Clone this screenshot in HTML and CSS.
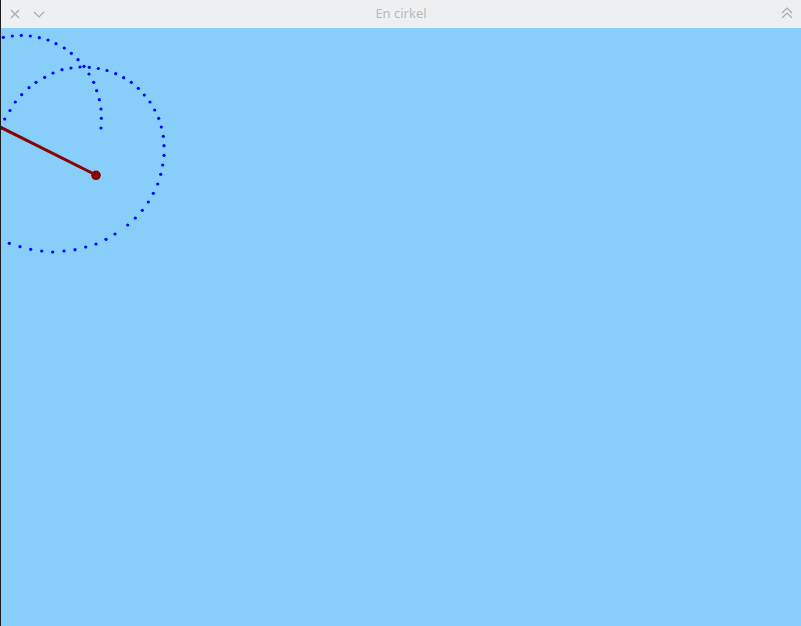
FILE: index.html
```html
<!DOCTYPE html>
<html lang="sv">
<head>
<meta charset="utf-8">
<title>En cirkel</title>
<link rel="stylesheet" href="styles.css">
</head>
<body>
<div class="window">
  <header class="titlebar">
    <div class="left-btns">
      <svg class="icon" width="14" height="14" viewBox="0 0 14 14"><path d="M3 3 L11 11 M11 3 L3 11" stroke="#a9aaac" stroke-width="1.2" fill="none"/></svg>
      <svg class="icon" width="14" height="14" viewBox="0 0 14 14"><path d="M2 5 L7 10 L12 5" stroke="#a9aaac" stroke-width="1.2" fill="none"/></svg>
    </div>
    <div class="title">En cirkel</div>
    <div class="right-btns">
      <svg class="icon" width="14" height="14" viewBox="0 0 14 14"><path d="M2 7 L7 2 L12 7 M2 12 L7 7 L12 12" stroke="#a9aaac" stroke-width="1.2" fill="none"/></svg>
    </div>
  </header>
  <main class="canvas">
    <svg class="drawing" width="800" height="598" viewBox="1 28 800 598">
      <g fill="#0000ff">
        <circle cx="3.3" cy="37.3" r="1.6"/><circle cx="12.3" cy="36" r="1.6"/><circle cx="21.3" cy="35.3" r="1.6"/><circle cx="30.3" cy="36" r="1.6"/><circle cx="39.3" cy="37.7" r="1.6"/><circle cx="48" cy="40" r="1.6"/><circle cx="56" cy="43.7" r="1.6"/><circle cx="64.3" cy="48" r="1.6"/><circle cx="71.3" cy="53.3" r="1.6"/><circle cx="78" cy="59.7" r="1.6"/><circle cx="84" cy="66.3" r="1.6"/><circle cx="89" cy="74" r="1.6"/><circle cx="93.7" cy="82.3" r="1.6"/><circle cx="96.7" cy="90.7" r="1.6"/><circle cx="99.3" cy="99.7" r="1.6"/><circle cx="101" cy="109" r="1.6"/><circle cx="101.3" cy="118.3" r="1.6"/><circle cx="101" cy="128" r="1.6"/>
        <circle cx="62" cy="69.7" r="1.6"/><circle cx="71" cy="68" r="1.6"/><circle cx="80" cy="67" r="1.6"/><circle cx="89.3" cy="67.3" r="1.6"/><circle cx="98.3" cy="68.5" r="1.6"/><circle cx="107" cy="70.5" r="1.6"/><circle cx="115.7" cy="73.7" r="1.6"/><circle cx="123.7" cy="77.7" r="1.6"/><circle cx="131.3" cy="82.3" r="1.6"/><circle cx="138.3" cy="88.3" r="1.6"/><circle cx="144.3" cy="95" r="1.6"/><circle cx="150" cy="102" r="1.6"/><circle cx="154.7" cy="110" r="1.6"/><circle cx="158.7" cy="118.3" r="1.6"/><circle cx="161.3" cy="127" r="1.6"/><circle cx="163.3" cy="136.3" r="1.6"/><circle cx="164" cy="145.7" r="1.6"/><circle cx="164" cy="155.3" r="1.6"/><circle cx="162.7" cy="165" r="1.6"/><circle cx="160.7" cy="174.3" r="1.6"/><circle cx="157.7" cy="184" r="1.6"/><circle cx="153.3" cy="193.3" r="1.6"/><circle cx="148.3" cy="202" r="1.6"/><circle cx="142.3" cy="210.3" r="1.6"/><circle cx="135.3" cy="218" r="1.6"/><circle cx="127.7" cy="225" r="1.6"/><circle cx="115" cy="234" r="1.6"/><circle cx="106" cy="239.3" r="1.6"/><circle cx="96" cy="244" r="1.6"/><circle cx="85.7" cy="247" r="1.6"/><circle cx="75" cy="249.7" r="1.6"/><circle cx="64" cy="251" r="1.6"/><circle cx="52.7" cy="252" r="1.6"/><circle cx="41.7" cy="251" r="1.6"/><circle cx="30.7" cy="249.3" r="1.6"/><circle cx="20" cy="246.7" r="1.6"/><circle cx="9.3" cy="243.3" r="1.6"/>
        <circle cx="1.7" cy="128" r="1.6"/><circle cx="4.7" cy="119" r="1.6"/><circle cx="10" cy="110.5" r="1.6"/><circle cx="15.3" cy="102" r="1.6"/><circle cx="21.7" cy="94.7" r="1.6"/><circle cx="29" cy="87.7" r="1.6"/><circle cx="36" cy="82.3" r="1.6"/><circle cx="44.7" cy="77.3" r="1.6"/><circle cx="53" cy="73" r="1.6"/>
      </g>
      <line x1="0" y1="127" x2="96" y2="175" stroke="#8b0000" stroke-width="3"/>
      <circle cx="96" cy="175.3" r="4.8" fill="#8b0000"/>
    </svg>
  </main>
</div>
</body>
</html>
```
FILE: styles.css
```css
html, body {
  margin: 0;
  padding: 0;
  height: 100%;
  overflow: hidden;
}
body {
  background: #87cefa;
  font-family: "Noto Sans", "Open Sans", sans-serif;
}
.window {
  display: flex;
  flex-direction: column;
  height: 626px;
  width: 801px;
  border-left: 1px solid #1b1e1c;
  box-sizing: border-box;
}
.titlebar {
  height: 28px;
  flex: 0 0 28px;
  background: #eeeff1;
  display: flex;
  align-items: center;
  justify-content: space-between;
  position: relative;
}
.left-btns {
  display: flex;
  gap: 10px;
  padding-left: 7px;
  margin-top: -1px;
}
.right-btns {
  display: flex;
  padding-right: 7px;
  margin-top: -2px;
}
.icon {
  display: block;
}
.title {
  position: absolute;
  left: 0;
  right: 0;
  top: 5px;
  text-align: center;
  font-size: 13px;
  color: #b9babc;
  pointer-events: none;
  line-height: 17px;
}
.canvas {
  flex: 1;
  background: #87cefa;
  overflow: hidden;
}
.drawing {
  display: block;
}
```
